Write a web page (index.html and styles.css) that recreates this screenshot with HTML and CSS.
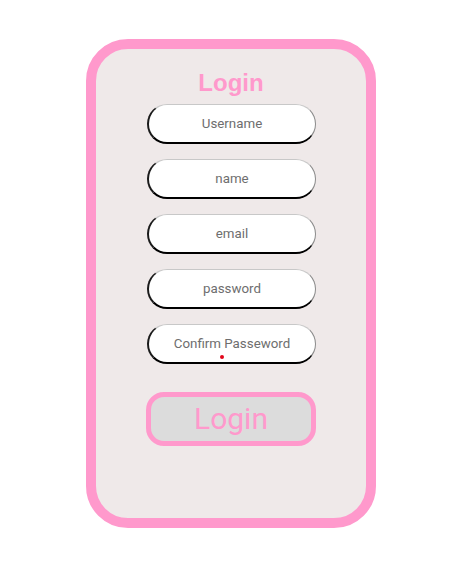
FILE: index.html
```html
<!DOCTYPE html>
<html>
<head>
<meta charset="utf-8">
<link rel="stylesheet" href="styles.css">
</head>
<body>
  <div class="card">
    <h1 class="title">Login</h1>
    <div class="fields">
      <div class="field"><input class="input" type="text" placeholder="Username"></div>
      <div class="field"><input class="input" type="text" placeholder="name"></div>
      <div class="field"><input class="input" type="text" placeholder="email"></div>
      <div class="field"><input class="input" type="password" placeholder="password"></div>
      <div class="field"><input class="input" type="password" placeholder="Confirm Passeword"><span class="dot"></span></div>
    </div>
    <button class="btn">Login</button>
  </div>
</body>
</html>
```

FILE: styles.css
```css
html, body {
  margin: 0;
  padding: 0;
  background: #ffffff;
}
.card {
  box-sizing: border-box;
  width: 290px;
  height: 489px;
  margin: 39px 0 0 86px;
  border: 10px solid #ff99cc;
  border-radius: 42px;
  background: #efe9e9;
  display: flex;
  flex-direction: column;
  align-items: center;
  padding-top: 20px;
}
.title {
  margin: 0;
  font-family: "Liberation Sans", Arial, sans-serif;
  font-weight: bold;
  font-size: 24px;
  line-height: 28px;
  color: #ff99cc;
}
.fields {
  margin-top: 7px;
  display: flex;
  flex-direction: column;
  gap: 15px;
  margin-left: 1px;
}
.field {
  position: relative;
  width: 169px;
  height: 40px;
}
.input {
  box-sizing: border-box;
  width: 169px;
  height: 40px;
  border: 1px solid;
  border-color: #c8c8c8 #8a8a8a #000 #1a1a1a;
  border-bottom-width: 2px;
  border-left-width: 2px;
  border-radius: 20px;
  background: #ffffff;
  text-align: center;
  font-family: Roboto, "Liberation Sans", sans-serif;
  font-size: 13.333px;
  color: #666;
  padding: 0 8px;
  outline: none;
}
.input::placeholder {
  color: #6e6e6e;
}
.dot {
  position: absolute;
  left: 73px;
  top: 31px;
  width: 4px;
  height: 4px;
  border-radius: 50%;
  background: #e2061b;
}
.btn {
  box-sizing: border-box;
  margin-top: 28px;
  width: 170px;
  height: 54px;
  border: 5px solid #ff99cc;
  border-radius: 18px;
  background: #dcdcdc;
  color: #ff99cc;
  font-family: Roboto, "Liberation Sans", sans-serif;
  font-size: 30px;
  line-height: 40px;
  padding: 0;
}
```
